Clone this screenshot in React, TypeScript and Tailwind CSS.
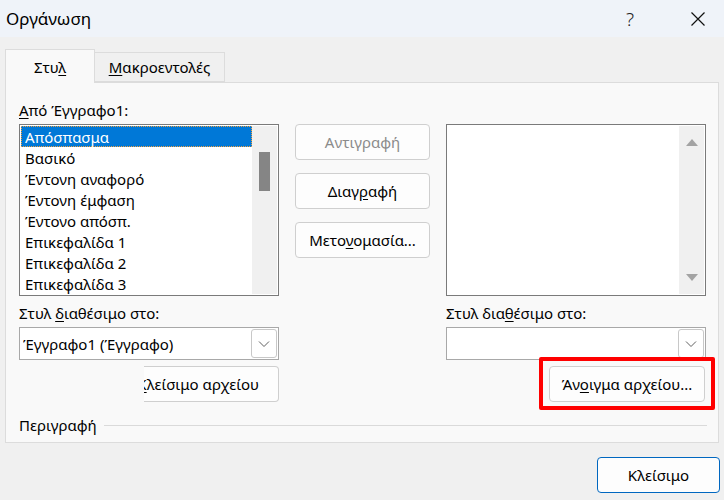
import { useState } from "react";

const styles = [
  "Απόσπασμα",
  "Βασικό",
  "Έντονη αναφορό",
  "Έντονη έμφαση",
  "Έντονο απόσπ.",
  "Επικεφαλίδα 1",
  "Επικεφαλίδα 2",
  "Επικεφαλίδα 3",
];

function Chevron() {
  return (
    <svg width="12" height="8" viewBox="0 0 12 8" className="text-[#606060]">
      <polyline points="1,1.5 6,6.5 11,1.5" fill="none" stroke="currentColor" strokeWidth="1" />
    </svg>
  );
}

function Combo({ value }: { value?: string }) {
  return (
    <div className="h-[33px] bg-white border border-[#a8a8a8] flex items-center pl-[3px] pr-[1px]">
      <span className="flex-1 truncate">{value}</span>
      <div className="w-[26px] h-[29px] border border-[#c8c8c8] rounded-[3px] flex items-center justify-center bg-white">
        <Chevron />
      </div>
    </div>
  );
}

function Btn({
  children,
  disabled,
  wide,
}: {
  children: React.ReactNode;
  disabled?: boolean;
  wide?: boolean;
}) {
  return (
    <button
      className={`h-[36px] ${wide ? "w-[156px]" : "w-[135px]"} rounded-[4px] border border-[#cfcfcf] bg-[#fdfdfd] flex items-center justify-center ${
        disabled ? "text-[#8b8b8b]" : "text-black"
      }`}
    >
      {children}
    </button>
  );
}

export default function App() {
  const [selected, setSelected] = useState(0);

  return (
    <div
      className="w-[724px] h-[500px] bg-[#f0f0f0] text-black text-[15px] leading-[20px] overflow-hidden flex flex-col"
      style={{ fontFamily: '"Noto Sans", "Open Sans", sans-serif' }}
    >
      {/* Title bar */}
      <div className="h-[37px] bg-[#eff3f9] flex items-center shrink-0">
        <span className="pl-[6px] text-[17px] flex-1">Οργάνωση</span>
        <span className="text-[19px] text-[#222] mr-[57px] font-light">?</span>
        <svg width="14" height="14" viewBox="0 0 14 14" className="mr-[19px]">
          <path d="M0.5 0.5 L13.5 13.5 M13.5 0.5 L0.5 13.5" stroke="#111" strokeWidth="1.2" />
        </svg>
      </div>

      <div className="pl-[5px] pr-[5px] pt-[12px] flex flex-col">
        {/* Tabs */}
        <div className="flex items-end h-[33px] relative z-10">
          <div className="w-[90px] h-[34px] -mb-px bg-[#f9f9f9] border border-b-0 border-[#dcdcdc] flex items-center justify-center">
            <span>
              Στυ<span className="underline underline-offset-2">λ</span>
            </span>
          </div>
          <div className="w-[130px] h-[30px] bg-[#f0f0f0] border border-l-0 border-[#dcdcdc] flex items-center justify-center">
            <span>
              <span className="underline underline-offset-2">Μ</span>ακροεντολές
            </span>
          </div>
        </div>

        {/* Panel */}
        <div className="bg-[#f9f9f9] border border-[#dcdcdc] w-[714px] h-[361px] pl-[13px] pt-[17px]">
          <div className="grid grid-cols-[260px_135px_260px] gap-x-[16px]">
            {/* Left column */}
            <div className="flex flex-col">
              <div className="h-[20px]">
                <span className="underline underline-offset-2">Α</span>πό Έγγραφο1:
              </div>
              <div className="mt-[4px] h-[172px] border border-[#7a7a7a] bg-white flex p-px">
                <div className="flex-1 flex flex-col">
                  {styles.map((s, i) => (
                    <div
                      key={s}
                      onClick={() => setSelected(i)}
                      className={`h-[21px] pl-[4px] flex items-center whitespace-nowrap ${
                        i === selected
                          ? "bg-[#0078d7] text-white outline outline-1 outline-dotted outline-[#f0a040] -outline-offset-1"
                          : ""
                      }`}
                    >
                      {s}
                    </div>
                  ))}
                </div>
                <div className="w-[25px] bg-[#f0f0f0] flex justify-center pt-[26px]">
                  <div className="w-[11px] h-[39px] bg-[#858585]" />
                </div>
              </div>
              <div className="mt-[7px] h-[20px]">
                Στυλ <span className="underline underline-offset-2">δ</span>ιαθέσιμο στο:
              </div>
              <div className="mt-[4px]">
                <Combo value="Έγγραφο1 (Έγγραφο)" />
              </div>
              <div className="mt-[6px] flex justify-end">
                {/* partly scrolled-off button: its label is cut at the left edge, as in the dialog */}
                <button className="h-[36px] w-[135px] rounded-r-[4px] border border-l-0 border-[#cfcfcf] bg-[#fdfdfd] overflow-hidden flex items-center justify-end pr-[19px] whitespace-nowrap">
                  <span>
                    <span className="underline underline-offset-2">Κ</span>λείσιμο αρχείου
                  </span>
                </button>
              </div>
            </div>

            {/* Middle buttons */}
            <div className="flex flex-col gap-[13px] pt-[24px]">
              <Btn disabled>Αντιγραφή</Btn>
              <Btn>
                <span>
                  Διαγ<span className="underline underline-offset-2">ρ</span>αφή
                </span>
              </Btn>
              <Btn>
                <span>
                  Μετο<span className="underline underline-offset-2">ν</span>ομασία...
                </span>
              </Btn>
            </div>

            {/* Right column */}
            <div className="flex flex-col">
              <div className="h-[20px]" />
              <div className="mt-[4px] h-[172px] border border-[#7a7a7a] bg-white flex p-px">
                <div className="flex-1" />
                <div className="w-[25px] bg-[#f0f0f0] flex flex-col items-center justify-between py-[12px]">
                  <svg width="12" height="8" viewBox="0 0 12 8">
                    <polygon points="0,8 6,1 12,8" fill="#a3a3a3" />
                  </svg>
                  <svg width="12" height="8" viewBox="0 0 12 8">
                    <polygon points="0,0 6,7 12,0" fill="#a3a3a3" />
                  </svg>
                </div>
              </div>
              <div className="mt-[7px] h-[20px]">
                Στυλ δια<span className="underline underline-offset-2">θ</span>έσιμο στο:
              </div>
              <div className="mt-[4px]">
                <Combo />
              </div>
              <div className="mt-[6px] flex justify-end pr-px">
                <div className="relative">
                  <Btn wide>
                    <span className="whitespace-nowrap">
                      Άν<span className="underline underline-offset-2">ο</span>ιγμα αρχείου...
                    </span>
                  </Btn>
                  <div className="absolute -left-[10px] -right-[10px] -top-[9px] -bottom-[8px] border-[4px] border-[#ff0000] rounded-[2px] pointer-events-none" />
                </div>
              </div>
            </div>
          </div>

          {/* Description */}
          <div className="mt-[13px] flex items-center h-[20px] pr-[11px]">
            <span>Περιγραφή</span>
            <div className="flex-1 ml-[7px] border-t border-[#dadada]" />
          </div>
        </div>

        {/* Footer */}
        <div className="mt-[14px] flex justify-end -mr-px">
          <button className="h-[36px] w-[123px] rounded-[4px] border border-[#0067c0] bg-[#fdfdfd] flex items-center justify-center">
            Κλείσιμο
          </button>
        </div>
      </div>
    </div>
  );
}
